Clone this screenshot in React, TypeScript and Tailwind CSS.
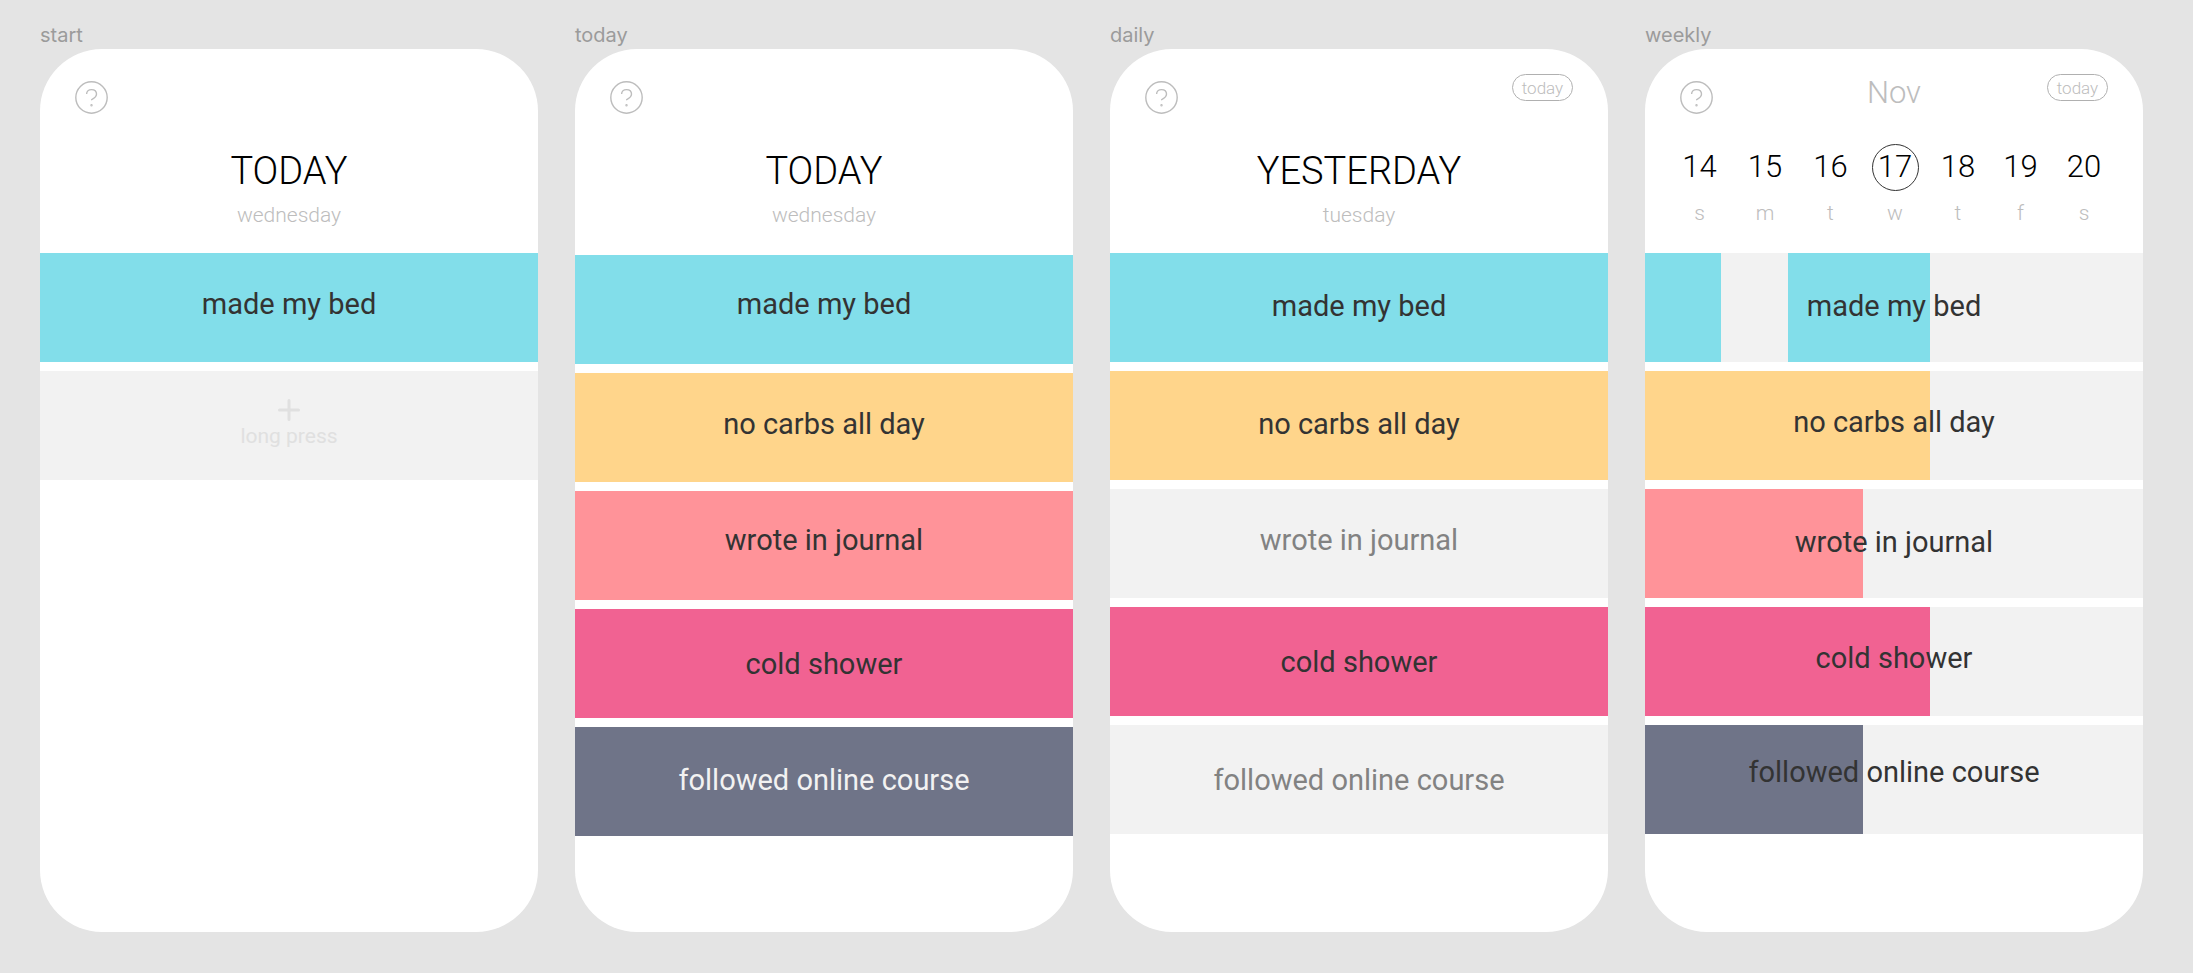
import React from "react";

type Tone = "dark" | "muted" | "light";

interface Habit {
  name: string;
  color: string;
  tone: Tone;
  lift: string;
  week?: boolean[];
}

const CYAN = "bg-[#82deea]";
const YELLOW = "bg-[#ffd58b]";
const CORAL = "bg-[#ff9399]";
const PINK = "bg-[#f16292]";
const SLATE = "bg-[#6f7488]";
const EMPTY = "bg-[#f2f2f2]";

const TONES: Record<Tone, string> = {
  dark: "text-[#333333]",
  muted: "text-[#828282]",
  light: "text-[#f2f2f2]",
};

const DAYS = [
  { date: 14, letter: "s" },
  { date: 15, letter: "m" },
  { date: 16, letter: "t" },
  { date: 17, letter: "w", current: true },
  { date: 18, letter: "t" },
  { date: 19, letter: "f" },
  { date: 20, letter: "s" },
];

const startHabits: Habit[] = [{ name: "made my bed", color: CYAN, tone: "dark", lift: "pb-2" }];

const todayHabits: Habit[] = [
  { name: "made my bed", color: CYAN, tone: "dark", lift: "pb-3" },
  { name: "no carbs all day", color: YELLOW, tone: "dark", lift: "pb-2" },
  { name: "wrote in journal", color: CORAL, tone: "dark", lift: "pb-3" },
  { name: "cold shower", color: PINK, tone: "dark", lift: "pb-0" },
  { name: "followed online course", color: SLATE, tone: "light", lift: "pb-1" },
];

const dailyHabits: Habit[] = [
  { name: "made my bed", color: CYAN, tone: "dark", lift: "pb-1" },
  { name: "no carbs all day", color: YELLOW, tone: "dark", lift: "pb-1" },
  { name: "wrote in journal", color: EMPTY, tone: "muted", lift: "pb-2" },
  { name: "cold shower", color: PINK, tone: "dark", lift: "pb-0" },
  { name: "followed online course", color: EMPTY, tone: "muted", lift: "pb-0" },
];

const weeklyHabits: Habit[] = [
  { name: "made my bed", color: CYAN, tone: "dark", lift: "pb-1", week: [true, false, true, true, false, false, false] },
  { name: "no carbs all day", color: YELLOW, tone: "dark", lift: "pb-2", week: [true, true, true, true, false, false, false] },
  { name: "wrote in journal", color: CORAL, tone: "dark", lift: "pb-1", week: [true, true, true, false, false, false, false] },
  { name: "cold shower", color: PINK, tone: "dark", lift: "pb-2", week: [true, true, true, true, false, false, false] },
  { name: "followed online course", color: SLATE, tone: "dark", lift: "pb-4", week: [true, true, true, false, false, false, false] },
];

function HelpButton() {
  return (
    <button type="button" aria-label="Help" className="mt-[7px] size-[33px]">
      <svg viewBox="0 0 33 33" fill="none" stroke="#bdbdbd" strokeWidth="1.4" className="size-full">
        <circle cx="16.5" cy="16.5" r="15.7" />
        <path d="M11.6 13.1C11.6 10.2 13.7 8.6 16.5 8.6C19.4 8.6 21.5 10.4 21.5 13.1C21.5 16.5 18.9 17.6 16.2 19" />
        <circle cx="16.5" cy="24.3" r="0.5" />
      </svg>
    </button>
  );
}

function TopBar({ month, showToday }: { month?: string; showToday?: boolean }) {
  return (
    <div className="grid grid-cols-3 items-start px-[35px] pt-[25px]">
      <HelpButton />
      <p className="pt-[1px] text-center text-[31px] leading-9 font-light text-[#bdbdbd]">{month}</p>
      {showToday && (
        <button
          type="button"
          className="h-[27px] w-[61px] justify-self-end rounded-full border border-[#b0b0b0] text-[17px] leading-6 font-light text-[#bdbdbd]"
        >
          today
        </button>
      )}
    </div>
  );
}

function DayTitle({ title, weekday }: { title: string; weekday: string }) {
  return (
    <div className="pt-[35px] text-center font-light">
      <h2 className="text-[38px] leading-[44px] text-black">{title}</h2>
      <p className="pt-[10px] text-[21px] leading-6 text-[#bdbdbd]">{weekday}</p>
    </div>
  );
}

function WeekDays() {
  return (
    <ol className="grid grid-cols-[65fr_66fr_65fr_64fr_62fr_63fr_64fr] pt-[30px] pr-[27px] pl-[22px] font-light">
      {DAYS.map((day) => (
        <li key={day.date} className="flex flex-col items-center">
          <span
            className={
              day.current
                ? "flex size-[47px] items-center justify-center rounded-full border border-[#333333] text-[31px] text-black"
                : "flex size-[47px] items-center justify-center text-[31px] text-black"
            }
          >
            {day.date}
          </span>
          <span className="pt-[10px] text-[21px] leading-6 text-[#bdbdbd]">{day.letter}</span>
        </li>
      ))}
    </ol>
  );
}

function HabitRow({ habit }: { habit: Habit }) {
  const track = habit.week ? EMPTY : habit.color;
  return (
    <li>
      <button type="button" className={`grid h-[109px] w-full ${track}`}>
        {habit.week && (
          <span className="grid grid-cols-[76fr_67fr_75fr_67fr_67fr_67fr_79fr] [grid-area:1/1]">
            {habit.week.map((done, i) => (
              <span key={i} className={done ? habit.color : EMPTY} />
            ))}
          </span>
        )}
        <span
          className={`flex items-center justify-center text-[29px] leading-9 [grid-area:1/1] ${TONES[habit.tone]} ${habit.lift}`}
        >
          {habit.name}
        </span>
      </button>
    </li>
  );
}

function AddRow() {
  return (
    <li>
      <button
        type="button"
        className="flex h-[109px] w-full flex-col items-center bg-[#f2f2f2] pt-7 text-[21px] leading-6 text-[#e0e0e0]"
      >
        <svg viewBox="0 0 22 22" fill="none" stroke="#e0e0e0" strokeWidth="3" strokeLinecap="round" className="size-[22px]">
          <path d="M11 1.5V20.5M1.5 11H20.5" />
        </svg>
        <span className="pt-[3px]">long press</span>
      </button>
    </li>
  );
}

interface FrameProps {
  label: string;
  headerHeight?: string;
  header: React.ReactNode;
  habits: Habit[];
  canAdd?: boolean;
}

function Frame({ label, headerHeight = "h-[204px]", header, habits, canAdd }: FrameProps) {
  return (
    <section className="flex flex-col">
      <h1 className="mb-[2px] font-['Inter',sans-serif] text-xl leading-6 text-[#9b9b9b]">{label}</h1>
      <div className="flex-1 overflow-hidden rounded-[62px] bg-white pb-24">
        <header className={headerHeight}>{header}</header>
        <ul className="flex flex-col gap-[9px]">
          {habits.map((habit) => (
            <HabitRow key={habit.name} habit={habit} />
          ))}
          {canAdd && <AddRow />}
        </ul>
      </div>
    </section>
  );
}

export default function App() {
  return (
    <main className="grid min-h-screen grid-cols-4 content-start gap-[37px] bg-[#e4e4e4] pt-[23px] pr-[50px] pb-10 pl-10 font-['Roboto',sans-serif]">
      <Frame
        label="start"
        header={
          <>
            <TopBar />
            <DayTitle title="TODAY" weekday="wednesday" />
          </>
        }
        habits={startHabits}
        canAdd
      />
      <Frame
        label="today"
        headerHeight="h-[206px]"
        header={
          <>
            <TopBar />
            <DayTitle title="TODAY" weekday="wednesday" />
          </>
        }
        habits={todayHabits}
      />
      <Frame
        label="daily"
        header={
          <>
            <TopBar showToday />
            <DayTitle title="YESTERDAY" weekday="tuesday" />
          </>
        }
        habits={dailyHabits}
      />
      <Frame
        label="weekly"
        header={
          <>
            <TopBar month="Nov" showToday />
            <WeekDays />
          </>
        }
        habits={weeklyHabits}
      />
    </main>
  );
}
